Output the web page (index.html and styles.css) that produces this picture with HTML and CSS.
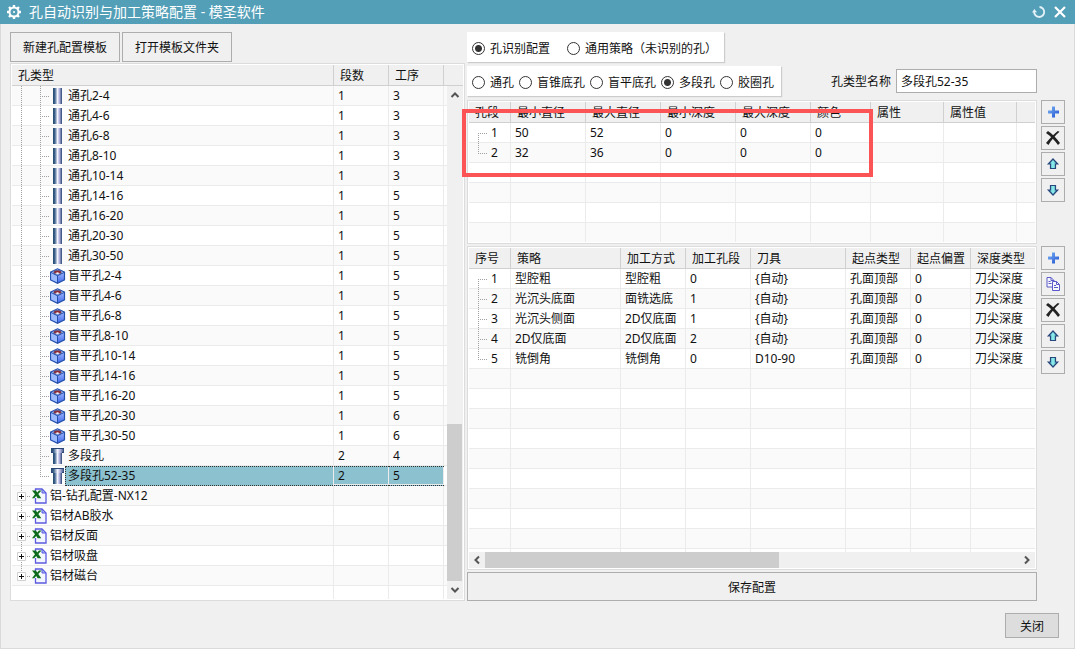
FILE: index.html
```html
<!DOCTYPE html>
<html lang="zh-CN">
<head>
    <meta charset="UTF-8">
    <meta name="viewport" content="width=device-width, initial-scale=1.0">
    <title>孔自动识别与加工策略配置 - 模圣软件</title>
    <link rel="stylesheet" href="styles.css">
</head>
<body>
    <!-- shared icons -->
    <svg class="sprite" width="0" height="0" aria-hidden="true">
        <defs>
            <linearGradient id="steel" x1="0" x2="1" y1="0" y2="0">
                <stop offset="0" stop-color="#26486f"/>
                <stop offset=".2" stop-color="#3d628c"/>
                <stop offset=".5" stop-color="#f4f4ff"/>
                <stop offset=".75" stop-color="#a3a6d4"/>
                <stop offset="1" stop-color="#2b4775"/>
            </linearGradient>
            <linearGradient id="blue" x1="0" x2="1" y1="0" y2="1">
                <stop offset="0" stop-color="#7db4f5"/>
                <stop offset="1" stop-color="#1d4fd0"/>
            </linearGradient>
            <linearGradient id="front" x1="0" x2="0" y1="0" y2="1">
                <stop offset="0" stop-color="#b9ccff"/>
                <stop offset="1" stop-color="#3f69ee"/>
            </linearGradient>
            <linearGradient id="teal" x1="0" x2="1" y1="0" y2="0">
                <stop offset="0" stop-color="#4aa5c4"/>
                <stop offset=".5" stop-color="#8ff0ec"/>
                <stop offset="1" stop-color="#3fa3b8"/>
            </linearGradient>
        </defs>
        <symbol id="i-pipe" viewBox="0 0 16 16">
            <rect x="3" y="0" width="9" height="16" fill="url(#steel)"/>
        </symbol>
        <symbol id="i-step" viewBox="0 0 16 16">
            <rect x="1" y="0" width="13" height="5" fill="url(#steel)"/>
            <rect x="3" y="5" width="9" height="11" fill="url(#steel)"/>
            <path d="M1 .5h13M1 4.500h2M12 4.500h2" stroke="#2b4775"/>
        </symbol>
        <symbol id="i-cube" viewBox="0 0 16 16">
            <path d="M7.500 .8 14.500 4.200v7.600L7.500 15.300 .6 11.800V4.200z" fill="url(#front)" stroke="#2450ac" stroke-width="1.200"/>
            <path d="M1.200 5 7 7.800v6.400L1.200 11.400z" fill="#9dbafc"/>
            <path d="M7.500 1.400 13.600 4.400 7.500 7.400 1.500 4.400z" fill="#a9bfee"/>
            <ellipse cx="7.500" cy="4.200" rx="3.800" ry="1.900" fill="#8e2a35" stroke="#46578f" stroke-width=".6"/>
            <path d="M5 5.300q2.500 1.200 5 0l-2.500-1.100z" fill="#f2f4ff"/>
            <path d="M.8 4.400 7.500 7.700l6.800-3.300M7.500 7.700v7.400" fill="none" stroke="#2450ac"/>
        </symbol>
        <symbol id="i-excel" viewBox="-1 0 16 16">
            <path d="M3.500 1h6.500l4 4v10H3.500z" fill="#f4f6ff" stroke="#5a5ae0" stroke-width="1.300"/>
            <path d="M10 1v4h4z" fill="#9fb0f5" stroke="#5a5ae0"/>
            <path d="M0 3h9v7H0z" fill="#f4fff4"/>
            <path d="M0 2.500h4l1.200 2L7 2.500h2.500L6.300 6l3 4.300H5.700L4.200 8l-2 2.300H0L3 6.300z" fill="#0e6b1d"/>
        </symbol>
        <symbol id="i-plus" viewBox="0 0 16 16">
            <path d="M7 2.500h3v4h4v3h-4v4H7v-4H3v-3h4z" fill="url(#blue)"/>
        </symbol>
        <symbol id="i-del" viewBox="0 0 16 16">
            <path d="M1 3 3 1C7 3.500 11 8 15 13L13 15C10 10.500 5.500 6 1 3z" fill="#222"/>
            <path d="M14.500 1.800 12.800 1C9 4 5 8.200 1 13L3.500 15C6 10.500 10 5.800 14.500 1.800z" fill="#222"/>
        </symbol>
        <symbol id="i-up" viewBox="0 0 16 16">
            <path d="M8 3 12.700 8H10.500v4.500h-5V8H3.300z" fill="url(#teal)" stroke="#28477c" stroke-width="1.200"/>
        </symbol>
        <symbol id="i-down" viewBox="0 0 16 16">
            <path d="M8 13 3.300 8H5.500V3.500h5V8h2.200z" fill="url(#teal)" stroke="#28477c" stroke-width="1.200"/>
        </symbol>
        <symbol id="i-copy" viewBox="0 0 16 16">
            <path d="M2 1.500h4L9 4.500V11H2z" fill="#f6f7ff" stroke="#5a5ac8"/>
            <path d="M6 1.500v3h3M3.500 5.500h2M3.500 7.500h3" fill="none" stroke="#5a5ac8"/>
            <path d="M7.500 5.500h4L14.500 8.500V14.500h-7z" fill="#f6f7ff" stroke="#5a5ac8"/>
            <path d="M11.500 5.500v3h3M9 9.500h2M9 11.500h4" fill="none" stroke="#5a5ac8"/>
        </symbol>
        <symbol id="i-chev" viewBox="0 0 16 16">
            <path d="M4.500 10 8 6.500 11.500 10" fill="none" stroke="#555" stroke-width="2"/>
        </symbol>
    </svg>

    <div class="dialog">
        <header class="titlebar">
            <svg class="gear" width="16" height="16" viewBox="0 0 16 16" aria-hidden="true">
                <circle cx="8" cy="8" r="4.500" fill="none" stroke="#fff" stroke-width="2"/>
                <circle cx="8" cy="8" r="1" fill="#fff"/>
                <path d="M8 1v2.500M8 12.500V15M1 8h2.500M12.500 8H15M3 3l1.800 1.800M11.200 11.200 13 13M13 3l-1.800 1.800M4.800 11.200 3 13" stroke="#fff" stroke-width="2.400"/>
            </svg>
            <h1>孔自动识别与加工策略配置 - 模圣软件</h1>
            <button type="button" class="title-button" aria-label="重置">
                <svg width="14" height="14" viewBox="0 0 14 14"><path d="M7.500 2a5 5 0 1 1-5.300 4.500" fill="none" stroke="#e4f1f6" stroke-width="1.800"/><path d="M0 7.500 2.300 4 5 7.300z" fill="#e4f1f6"/></svg>
            </button>
            <button type="button" class="title-button" aria-label="关闭窗口">
                <svg width="14" height="14" viewBox="0 0 14 14"><path d="M2 2l10 10M12 2 2 12" stroke="#fff" stroke-width="2.200"/></svg>
            </button>
        </header>

        <main class="main">
            <section class="left">
                <div class="template-buttons">
                    <button type="button" class="btn">新建孔配置模板</button>
                    <button type="button" class="btn">打开模板文件夹</button>
                </div>
                <div class="panel tree-panel">
                    <div class="view">
                        <table class="list tree">
                            <colgroup><col class="w322"><col class="w55"><col class="w55"><col></colgroup>
                            <thead><tr><th>孔类型</th><th>段数</th><th>工序</th><th></th></tr></thead>
                            <tbody id="tree"></tbody>
                        </table>
                    </div>
                    <div class="vscroll">
                        <div class="vscroll-head"></div>
                        <svg width="16" height="18" viewBox="0 0 16 16"><use href="#i-chev"/></svg>
                        <div class="track"><div class="thumb"></div></div>
                        <svg class="flip" width="16" height="18" viewBox="0 0 16 16"><use href="#i-chev"/></svg>
                    </div>
                </div>
            </section>

            <section class="right">
                <div class="radios mode">
                    <label><input type="radio" name="mode" checked>孔识别配置</label>
                    <label><input type="radio" name="mode">通用策略（未识别的孔）</label>
                </div>
                <div class="type-row">
                    <div class="radios">
                        <label><input type="radio" name="type">通孔</label>
                        <label><input type="radio" name="type">盲锥底孔</label>
                        <label><input type="radio" name="type">盲平底孔</label>
                        <label><input type="radio" name="type" checked>多段孔</label>
                        <label><input type="radio" name="type">胶圈孔</label>
                    </div>
                    <label class="name-label" for="name">孔类型名称</label>
                    <input type="text" class="name-input" id="name" value="多段孔52-35">
                </div>

                <div class="panel segments">
                    <div class="view">
                        <table class="list">
                            <colgroup><col class="w42"><col class="w75"><col class="w75"><col class="w75"><col class="w75"><col class="w60"><col class="w73"><col class="w73"><col></colgroup>
                            <thead><tr><th>孔段</th><th>最小直径</th><th>最大直径</th><th>最小深度</th><th>最大深度</th><th>颜色</th><th>属性</th><th>属性值</th><th></th></tr></thead>
                            <tbody id="segments"></tbody>
                        </table>
                    </div>
                    <div class="highlight"></div>
                </div>
                <div class="tools first-tools">
                    <button type="button" aria-label="添加孔段"><svg width="16" height="16"><use href="#i-plus"/></svg></button>
                    <button type="button" aria-label="删除孔段"><svg width="16" height="16"><use href="#i-del"/></svg></button>
                    <button type="button" aria-label="孔段上移"><svg width="16" height="16"><use href="#i-up"/></svg></button>
                    <button type="button" aria-label="孔段下移"><svg width="16" height="16"><use href="#i-down"/></svg></button>
                </div>

                <div class="panel steps">
                    <div class="view">
                        <table class="list">
                            <colgroup><col class="w42"><col class="w110"><col class="w65"><col class="w65"><col class="w95"><col class="w65"><col class="w60"><col></colgroup>
                            <thead><tr><th>序号</th><th>策略</th><th>加工方式</th><th>加工孔段</th><th>刀具</th><th>起点类型</th><th>起点偏置</th><th>深度类型</th></tr></thead>
                            <tbody id="steps"></tbody>
                        </table>
                    </div>
                    <div class="hscroll">
                        <svg class="to-left" width="16" height="16"><use href="#i-chev"/></svg>
                        <div class="track"><div class="thumb"></div></div>
                        <svg class="to-right" width="16" height="16"><use href="#i-chev"/></svg>
                    </div>
                </div>
                <div class="tools">
                    <button type="button" aria-label="添加工序"><svg width="16" height="16"><use href="#i-plus"/></svg></button>
                    <button type="button" aria-label="复制工序"><svg width="16" height="16"><use href="#i-copy"/></svg></button>
                    <button type="button" aria-label="删除工序"><svg width="16" height="16"><use href="#i-del"/></svg></button>
                    <button type="button" aria-label="工序上移"><svg width="16" height="16"><use href="#i-up"/></svg></button>
                    <button type="button" aria-label="工序下移"><svg width="16" height="16"><use href="#i-down"/></svg></button>
                </div>

                <button type="button" class="btn save">保存配置</button>
            </section>
        </main>

        <footer class="footer">
            <button type="button" class="btn close">关闭</button>
        </footer>
    </div>
    <script src="script.js"></script>
</body>
</html>
```

FILE: styles.css
```css
*{
    margin: 0;
    padding: 0;
    box-sizing: border-box;
}
body, button, input{
    font-family: "Noto Sans","Noto Sans CJK SC",sans-serif;
    font-size: 12px;
    color: #111;
}
svg{
    display: block;
    flex: none;
}
.sprite{
    position: absolute;
}
.dialog{
    display: flex;
    flex-direction: column;
    height: 100vh;
    min-height: 480px;
    background-color: #f0f0f0;
    border: 1px solid #dadada;
    border-top: none;
}

/* title bar */
.titlebar{
    display: flex;
    align-items: center;
    height: 24px;
    flex: none;
    margin: 0 -1px;
    padding: 0 8px 0 6px;
    background-color: #549fb8;
}
.titlebar h1{
    flex: 1;
    margin-left: 7px;
    font-size: 14px;
    line-height: 24px;
    font-weight: 400;
    color: #fff;
}
.title-button{
    margin-left: 7px;
    border: none;
    background: none;
}

/* two columns */
.main{
    display: grid;
    grid-template-columns: 455px minmax(0,1fr);
    column-gap: 2px;
    flex: 1;
    min-height: 0;
    padding: 8px 9px 0;
}
.left{
    display: flex;
    flex-direction: column;
    gap: 1px;
    min-height: 0;
}
.template-buttons{
    display: flex;
    gap: 2px;
}
.btn{
    height: 30px;
    padding: 0 12px;
    border: 1px solid #adadad;
    background-color: #f0f0f0;
}
.template-buttons .btn{
    width: 110px;
}

/* lists */
.panel{
    display: flex;
    min-height: 0;
    padding: 1px;
    border: 1px solid #dcdcdc;
    background-color: #fff;
}
.view{
    flex: 1;
    min-width: 0;
    min-height: 0;
    overflow: hidden;
}
.list{
    width: 100%;
    table-layout: fixed;
    border-collapse: separate;
    border-spacing: 0;
}
.list th{
    height: 21px;
    padding: 0 0 0 6px;
    line-height: 20px;
    font-weight: 400;
    text-align: left;
    white-space: nowrap;
    background-color: #f0f0f0;
    box-shadow: inset -1px -1px 0 #d0d0d0;
}
.list td{
    height: 20px;
    padding: 0 0 0 4px;
    line-height: 20px;
    white-space: nowrap;
    box-shadow: inset -1px -1px 0 #ebebeb;
}
.list th:last-child{
    box-shadow: inset 0 -1px 0 #d0d0d0;
}
.list td:last-child{
    box-shadow: inset 0 -1px 0 #ebebeb;
}
.list tr:nth-child(even) td{
    background-color: #fafafa;
}
.tree tr:nth-child(odd) td{
    background-color: #fafafa;
}
.tree tr:nth-child(even) td{
    background-color: #fff;
}
.w42{ width: 42px; }
.w55{ width: 55px; }
.w60{ width: 60px; }
.w65{ width: 65px; }
.w73{ width: 73px; }
.w75{ width: 75px; }
.w95{ width: 95px; }
.w110{ width: 110px; }
.w322{ width: 322px; }

/* tree lines */
.list td.node{
    padding: 0;
}
.node-row{
    display: flex;
    align-items: center;
    height: 20px;
}
.line{
    flex: none;
    width: 19px;
    height: 20px;
    background: repeating-linear-gradient(#a0a0a0 0 1px,transparent 1px 2px) 9px 0 / 1px 20px no-repeat;
}
.line.branch{
    background:
        repeating-linear-gradient(#a0a0a0 0 1px,transparent 1px 2px) 9px 0 / 1px 20px no-repeat,
        repeating-linear-gradient(90deg,#a0a0a0 0 1px,transparent 1px 2px) 9px 10px / 9px 1px no-repeat;
}
.line.first{
    background-position: 9px 10px, 9px 10px;
}
.line.last{
    background-size: 1px 10px, 9px 1px;
}
.expander{
    margin: 6px 0 0 5px;
}
.label{
    flex: 1;
    height: 20px;
    padding-left: 3px;
}
.selected .label, .tree .selected td + td:not(:last-child){
    background-color: #8cc1d0;
    border: 1px dotted #333;
    border-width: 1px 0;
    line-height: 18px;
}
.selected .label{
    margin-right: 1px;
    padding-left: 2px;
    border-left-width: 1px;
}
.tree .selected td:nth-child(3){
    border-right-width: 1px;
}
.leaf .label{
    margin-left: -1px;
}
.index-row{
    display: flex;
}
.index-row .line{
    width: 22px;
}

/* scroll bars */
.vscroll{
    display: flex;
    flex-direction: column;
    width: 16px;
    background-color: #f0f0f0;
}
.vscroll-head{
    height: 21px;
    border-bottom: 1px solid #d0d0d0;
}
.track{
    flex: 1;
    display: flex;
}
.vscroll .track{
    flex-direction: column;
    justify-content: flex-end;
}
.thumb{
    background-color: #cdcdcd;
}
.vscroll .thumb{
    height: 33%;
    width: 15px;
}
.hscroll{
    display: flex;
    height: 16px;
    background-color: #f0f0f0;
}
.hscroll .thumb{
    width: 55%;
}
.flip{
    transform: rotate(180deg);
}
.to-left{
    transform: rotate(-90deg);
}
.to-right{
    transform: rotate(90deg);
}
.tree-panel{
    flex: 1;
}

/* right side */
.right{
    display: grid;
    grid-template-columns: minmax(0,1fr) 24px;
    grid-template-rows: 30px 32px 146px minmax(0,1fr) 29px;
    gap: 2px 4px;
    min-height: 0;
}
.radios{
    display: flex;
    align-items: center;
    justify-self: start;
    gap: 5px;
    height: 30px;
    padding: 2px 7px 0 5px;
    background-color: #fff;
    box-shadow: 1px 1px 1px #ccc;
}
.radios.mode{
    grid-column: 1 / 3;
    gap: 17px;
}
.radios label{
    display: flex;
    align-items: center;
    gap: 5px;
    white-space: nowrap;
}
.radios input{
    appearance: none;
    width: 13px;
    height: 13px;
    border: 1px solid #333;
    border-radius: 50%;
    background-color: #fff;
}
.radios input:checked{
    background: radial-gradient(circle,#333 0 3px,#fff 4px);
}
.type-row{
    display: flex;
    align-items: center;
    grid-column: 1;
    margin-top: 2px;
}
.name-label{
    margin: 0 5px 0 auto;
}
.name-input{
    width: 141px;
    height: 24px;
    padding: 0 4px;
    border: 1px solid #adadad;
    background-color: #fff;
}
.segments{
    position: relative;
    grid-column: 1;
    margin-top: 2px;
}
.first-tools{
    margin-top: 2px;
}
.steps{
    flex-direction: column;
    grid-column: 1;
}
/* frame round the recognised hole segments */
.highlight{
    position: absolute;
    left: -6px;
    top: 8px;
    width: 411px;
    height: 68px;
    border: 4px solid #fc5454;
    pointer-events: none;
}
.tools{
    display: flex;
    flex-direction: column;
    gap: 2px;
}
.tools button{
    display: grid;
    place-items: center;
    width: 24px;
    height: 24px;
    border: 1px solid #adadad;
    background-color: #f0f0f0;
}
.save{
    grid-column: 1;
    height: 29px;
}

.footer{
    display: flex;
    justify-content: flex-end;
    flex: none;
    padding: 12px 15px 10px;
}
.close{
    width: 54px;
    height: 25px;
    background-color: #ddd;
}
```

FILE: script.js
```js
const sizes = ['2-4', '4-6', '6-8', '8-10', '10-14', '14-16', '16-20', '20-30', '30-50'];

const holes = [
    ...sizes.map((size, i) => ['i-pipe', '通孔' + size, 1, i < 5 ? 3 : 5]),
    ...sizes.map((size, i) => ['i-cube', '盲平孔' + size, 1, i < 7 ? 5 : 6]),
    ['i-step', '多段孔', 2, 4],
    ['i-step', '多段孔52-35', 2, 5]
];
const templates = ['铝-钻孔配置-NX12', '铝材AB胶水', '铝材反面', '铝材吸盘', '铝材磁台'];

const segments = [
    [50, 52, 0, 0, 0, '', '', ''],
    [32, 36, 0, 0, 0, '', '', '']
];
const steps = [
    ['型腔粗', '型腔粗', 0, '{自动}', '孔面顶部', 0, '刀尖深度'],
    ['光沉头底面', '面铣选底', 1, '{自动}', '孔面顶部', 0, '刀尖深度'],
    ['光沉头侧面', '2D仅底面', 1, '{自动}', '孔面顶部', 0, '刀尖深度'],
    ['2D仅底面', '2D仅底面', 2, '{自动}', '孔面顶部', 0, '刀尖深度'],
    ['铣倒角', '铣倒角', 0, 'D10-90', '孔面顶部', 0, '刀尖深度']
];

const icon = id => `<svg width="16" height="16"><use href="#${id}"/></svg>`;
const emptyRow = cols => '<tr>' + '<td></td>'.repeat(cols) + '</tr>';

// hole tree
let html = '';
holes.forEach(([id, name, count, ops], i) => {
    const last = i === holes.length - 1;
    html += `<tr class="${last ? 'selected' : ''}"><td class="node"><div class="node-row leaf">
        <span class="line"></span><span class="line branch ${last ? 'last' : ''}"></span>${icon(id)}<span class="label">${name}</span>
        </div></td><td>${count}</td><td>${ops}</td><td></td></tr>`;
});
templates.forEach((name, i) => {
    const last = i === templates.length - 1;
    html += `<tr><td class="node"><div class="node-row">
        <span class="line branch ${last ? 'last' : ''}"><svg class="expander" width="9" height="9" viewBox="0 0 9 9"><path d="M.5.5h8v8h-8z" fill="#fff" stroke="#d0d0d0"/><path d="M2 4.500h5M4.500 2v5" stroke="#111"/></svg></span>${icon('i-excel')}<span class="label">${name}</span>
        </div></td><td></td><td></td><td></td></tr>`;
});
document.getElementById('tree').innerHTML = html + emptyRow(4);

// numbered lists
function fill(id, rows, total) {
    let out = '';
    rows.forEach((row, i) => {
        const pos = i === 0 ? 'first' : i === rows.length - 1 ? 'last' : '';
        out += `<tr><td class="node"><div class="index-row"><span class="line branch ${pos}"></span>${i + 1}</div></td>`;
        out += row.map(v => `<td>${v}</td>`).join('') + '</tr>';
    });
    out += emptyRow(rows[0].length + 1).repeat(total - rows.length);
    document.getElementById(id).innerHTML = out;
}
fill('segments', segments, 6);
fill('steps', steps, 15);
```
